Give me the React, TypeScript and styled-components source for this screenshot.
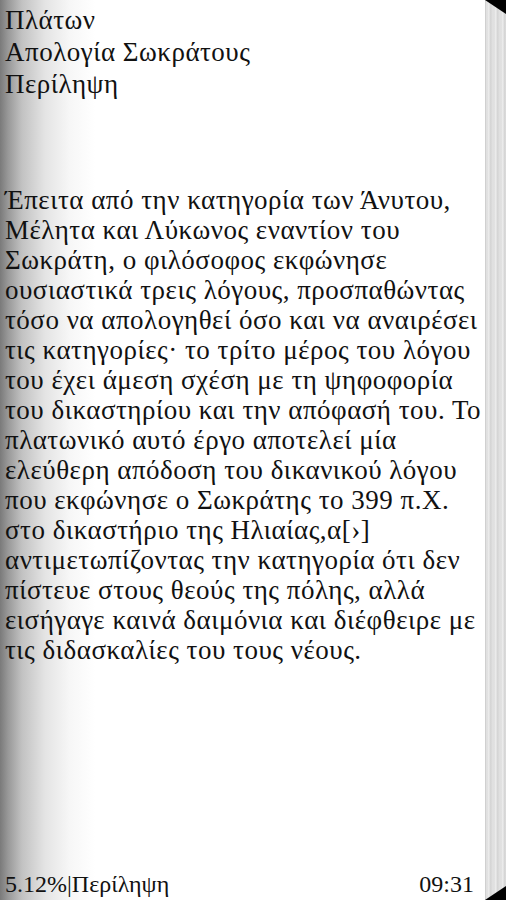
import React from 'react';
import styled, { createGlobalStyle } from 'styled-components';

const GlobalStyle = createGlobalStyle`
    html, body {
        margin: 0;
        padding: 0;
        background: #fff;
    }
`;

const Screen = styled.div`
    display: flex;
    flex-flow: row nowrap;
    width: 506px;
    height: 900px;
    overflow: hidden;
`;

const Page = styled.div`
    flex: 1 1 auto;
    display: flex;
    flex-direction: column;
    padding: 0 2px 0 5px;
    background: linear-gradient(
        to right,
        #7a7a7a 0px,
        #989898 8px,
        #c2c2c2 22px,
        #e4e4e4 45px,
        #f7f7f7 70px,
        #ffffff 95px
    );
    font: 400 27px/32px "Liberation Serif", "DejaVu Serif", serif;
    letter-spacing: 0.5px;
    color: #111;
`;

const Heading = styled.div`
    padding-top: 4px;
`;

const Body = styled.p`
    margin: 85px 0 0;
    line-height: 30px;
`;

const Footer = styled.div`
    margin-top: auto;
    display: flex;
    justify-content: space-between;
    align-items: flex-end;
    padding-bottom: 2px;
    font-size: 24px;
    line-height: 28px;
    letter-spacing: 0;
`;

const Clock = styled.span`
    padding-right: 9px;
`;

const Edge = styled.div`
    position: relative;
    flex: 0 0 20px;
    background: repeating-linear-gradient(
        to right,
        #ececec 0px,
        #d4d4d4 1px,
        #efefef 2px,
        #dedede 4px,
        #cdcdcd 5px,
        #e6e6e6 6px,
        #dadada 7px
    );
    border-left: 1px solid #d0d0d0;

    &::before,
    &::after {
        content: '';
        position: absolute;
        right: 0;
        width: 21px;
        height: 14px;
        background: #000;
    }
    &::before {
        top: 0;
        clip-path: polygon(0 0, 100% 0, 100% 100%);
    }
    &::after {
        bottom: 0;
        clip-path: polygon(100% 0, 100% 100%, 0 100%);
    }
`;

export default function App() {
    return (
        <>
            <GlobalStyle />
            <Screen>
                <Page>
                    <Heading>
                        Πλάτων<br />
                        Απολογία Σωκράτους<br />
                        Περίληψη
                    </Heading>
                    <Body>
                        Έπειτα από την κατηγορία των Άνυτου, Μέλητα και Λύκωνος εναντίον του
                        Σωκράτη, ο φιλόσοφος εκφώνησε ουσιαστικά τρεις λόγους, προσπαθώντας
                        τόσο να απολογηθεί όσο και να αναιρέσει τις κατηγορίες· το τρίτο μέρος
                        του λόγου του έχει άμεση σχέση με τη ψηφοφορία του δικαστηρίου και την
                        απόφασή του. Το πλατωνικό αυτό έργο αποτελεί μία ελεύθερη απόδοση του
                        δικανικού λόγου που εκφώνησε ο Σωκράτης το 399 π.Χ. στο δικαστήριο της
                        Ηλιαίας,α[›] αντιμετωπίζοντας την κατηγορία ότι δεν πίστευε στους θεούς
                        της πόλης, αλλά εισήγαγε καινά δαιμόνια και διέφθειρε με τις διδασκαλίες
                        του τους νέους.
                    </Body>
                    <Footer>
                        <span>5.12%|Περίληψη</span>
                        <Clock>09:31</Clock>
                    </Footer>
                </Page>
                <Edge />
            </Screen>
        </>
    );
}
